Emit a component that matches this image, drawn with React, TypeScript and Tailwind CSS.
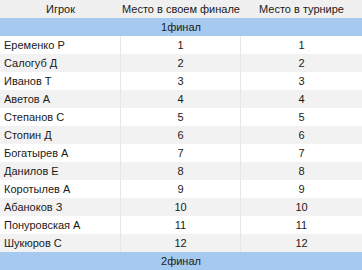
const players = [
  "Еременко Р",
  "Салогуб Д",
  "Иванов Т",
  "Аветов А",
  "Степанов С",
  "Стопин Д",
  "Богатырев А",
  "Данилов Е",
  "Коротылев А",
  "Абаноков З",
  "Понуровская А",
  "Шукюров С",
];

const Band = ({ label }: { label: string }) => (
  <div className="h-[18px] bg-[#a6c9ef] flex items-center justify-center">{label}</div>
);

export default function App() {
  return (
    <div
      className="w-[362px] h-[270px] overflow-hidden bg-white text-[11px] text-[#1a1a1a] whitespace-nowrap"
      style={{ fontFamily: "'Liberation Sans', Arial, sans-serif" }}
    >
      <div className="grid grid-cols-[121px_120px_121px] h-[18px] bg-[#f0f0f0] items-center text-center">
        <div>Игрок</div>
        <div>Место в своем финале</div>
        <div>Место в турнире</div>
      </div>
      <Band label="1финал" />
      {players.map((name, i) => (
        <div
          key={name}
          className={`grid grid-cols-[121px_120px_121px] h-[18px] ${i % 2 ? "bg-[#f2f2f2]" : "bg-white"}`}
        >
          <div className="flex items-center pl-1 border-r border-[#e6e6e6]">{name}</div>
          <div className="flex items-center justify-center border-r border-[#e6e6e6]">{i + 1}</div>
          <div className="flex items-center justify-center">{i + 1}</div>
        </div>
      ))}
      <Band label="2финал" />
    </div>
  );
}
